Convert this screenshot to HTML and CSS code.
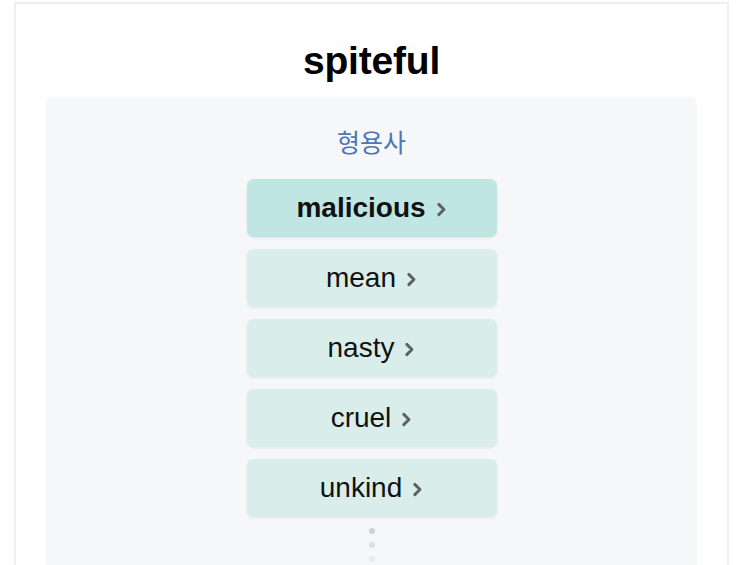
FILE: index.html
```html
<!DOCTYPE html>
<html lang="ko">
<head>
<meta charset="utf-8">
<link rel="stylesheet" href="styles.css">
</head>
<body>
<div class="card">
  <h1 class="title">spiteful</h1>
  <div class="panel">
    <div class="pos">형용사</div>
    <div class="list">
      <div class="item active"><span>malicious</span><svg class="chev" viewBox="0 0 10 14"><path d="M2.5 2.2 L7.3 7 L2.5 11.8" fill="none" stroke="currentColor" stroke-width="2.8" stroke-linecap="round" stroke-linejoin="round"/></svg></div>
      <div class="item"><span>mean</span><svg class="chev" viewBox="0 0 10 14"><path d="M2.5 2.2 L7.3 7 L2.5 11.8" fill="none" stroke="currentColor" stroke-width="2.8" stroke-linecap="round" stroke-linejoin="round"/></svg></div>
      <div class="item"><span>nasty</span><svg class="chev" viewBox="0 0 10 14"><path d="M2.5 2.2 L7.3 7 L2.5 11.8" fill="none" stroke="currentColor" stroke-width="2.8" stroke-linecap="round" stroke-linejoin="round"/></svg></div>
      <div class="item"><span>cruel</span><svg class="chev" viewBox="0 0 10 14"><path d="M2.5 2.2 L7.3 7 L2.5 11.8" fill="none" stroke="currentColor" stroke-width="2.8" stroke-linecap="round" stroke-linejoin="round"/></svg></div>
      <div class="item"><span>unkind</span><svg class="chev" viewBox="0 0 10 14"><path d="M2.5 2.2 L7.3 7 L2.5 11.8" fill="none" stroke="currentColor" stroke-width="2.8" stroke-linecap="round" stroke-linejoin="round"/></svg></div>
    </div>
    <div class="dots">
      <span class="dot d1"></span>
      <span class="dot d2"></span>
      <span class="dot d3"></span>
    </div>
  </div>
</div>
</body>
</html>
```

FILE: styles.css
```css
html, body {
  margin: 0;
  padding: 0;
  background: #ffffff;
  overflow: hidden;
}
body {
  font-family: "Liberation Sans", Arial, "Noto Sans CJK KR", sans-serif;
  color: #111;
}
.card {
  margin: 2px 0 0 14px;
  width: 715px;
  height: calc(100vh - 2px);
  border: 2px solid #efefef;
  border-bottom: none;
  box-sizing: border-box;
  padding: 34px 30px 0 30px;
  display: flex;
  flex-direction: column;
  overflow: hidden;
}
.title {
  margin: 0;
  text-align: center;
  font-size: 39px;
  line-height: 46px;
  font-weight: 700;
  color: #000;
  letter-spacing: -0.2px;
}
.panel {
  margin-top: 14px;
  flex: 1;
  background: #f6f7f9;
  border-radius: 8px 8px 0 0;
  box-shadow: 0 -1px 2px rgba(0,0,0,0.04);
  padding-top: 28px;
  display: flex;
  flex-direction: column;
  align-items: center;
  overflow: hidden;
}
.pos {
  font-family: "Noto Sans CJK KR", sans-serif;
  font-size: 25px;
  line-height: 30px;
  color: #4d76b4;
}
.list {
  margin-top: 23px;
  display: flex;
  flex-direction: column;
  gap: 12px;
}
.item {
  width: 250px;
  height: 58px;
  border-radius: 7px;
  background: #d9eeeb;
  box-shadow: 0 1px 3px rgba(0,0,0,0.08);
  display: flex;
  align-items: center;
  justify-content: center;
  gap: 10px;
  font-size: 28px;
  color: #111;
}
.item.active {
  background: #c0e6e3;
  font-weight: 700;
}
.chev {
  width: 11px;
  height: 15px;
  color: #5f6362;
  margin-top: 2px;
}
.dots {
  margin-top: 11px;
  display: flex;
  flex-direction: column;
  align-items: center;
  gap: 8px;
}
.dot {
  width: 6px;
  height: 6px;
  border-radius: 50%;
  background: #cdd1d7;
}
.dot.d2 { background: #dcdfe3; }
.dot.d3 { background: #e8eaed; }
```
